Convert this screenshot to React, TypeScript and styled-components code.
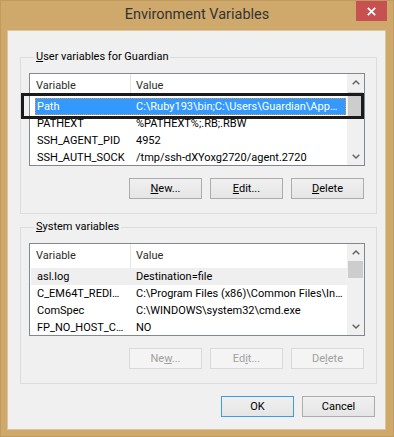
import React from 'react'
import styled, { createGlobalStyle } from 'styled-components'

type RowState = 'focused' | 'inactive' | 'none'

type EnvVar = {
  name: string
  value: string
  state?: RowState
}

const userVars: EnvVar[] = [
  { name: 'Path', value: 'C:\\Ruby193\\bin;C:\\Users\\Guardian\\App…', state: 'focused' },
  { name: 'PATHEXT', value: '%PATHEXT%;.RB;.RBW' },
  { name: 'SSH_AGENT_PID', value: '4952' },
  { name: 'SSH_AUTH_SOCK', value: '/tmp/ssh-dXYoxg2720/agent.2720' },
]

const systemVars: EnvVar[] = [
  { name: 'asl.log', value: 'Destination=file', state: 'inactive' },
  { name: 'C_EM64T_REDI…', value: 'C:\\Program Files (x86)\\Common Files\\In…' },
  { name: 'ComSpec', value: 'C:\\WINDOWS\\system32\\cmd.exe' },
  { name: 'FP_NO_HOST_C…', value: 'NO' },
]

const Chevron = ({ down }: { down?: boolean }) => (
  <svg width="8" height="5" viewBox="0 0 8 5">
    <polyline
      points={down ? '0.7,0.7 4,4 7.3,0.7' : '0.7,4.3 4,1 7.3,4.3'}
      fill="none"
      stroke="#606060"
      strokeWidth="1.4"
    />
  </svg>
)

const VarList = ({
  rows,
  thumbTop,
  thumbSize,
  marked,
}: {
  rows: EnvVar[]
  thumbTop: number
  thumbSize: number
  marked?: boolean
}) => (
  <List>
    <Table>
      <Header>
        <HeadCell $first>Variable</HeadCell>
        <HeadCell>Value</HeadCell>
      </Header>
      {rows.map((r) => (
        <Row key={r.name} $state={r.state ?? 'none'}>
          <RowInner $state={r.state ?? 'none'}>
            <NameCell>{r.name}</NameCell>
            <ValueCell>{r.value}</ValueCell>
          </RowInner>
        </Row>
      ))}
    </Table>
    <ScrollBar>
      <Arrow>
        <Chevron />
      </Arrow>
      <Track>
        <Thumb $top={thumbTop} $size={thumbSize} />
      </Track>
      <Arrow>
        <Chevron down />
      </Arrow>
    </ScrollBar>
    {marked && <Marker />}
  </List>
)

export default function App() {
  return (
    <>
      <GlobalStyle />
      <Window>
        <TitleBar>
          <Title>Environment Variables</Title>
          <CloseButton>
            <svg width="9" height="9" viewBox="0 0 9 9">
              <path d="M0.8 0.8 L8.2 8.2 M8.2 0.8 L0.8 8.2" stroke="#fff" strokeWidth="1.7" />
            </svg>
          </CloseButton>
        </TitleBar>
        <Client>
          <Group>
            <Legend>
              <u>U</u>ser variables for Guardian
            </Legend>
            <VarList rows={userVars} thumbTop={1} thumbSize={26} marked />
            <ButtonRow>
              <Button>
                <u>N</u>ew...
              </Button>
              <Button>
                <u>E</u>dit...
              </Button>
              <Button>
                <u>D</u>elete
              </Button>
            </ButtonRow>
          </Group>
          <Group $second>
            <Legend>
              <u>S</u>ystem variables
            </Legend>
            <VarList rows={systemVars} thumbTop={0} thumbSize={17} />
            <ButtonRow>
              <Button disabled>
                Ne<u>w</u>...
              </Button>
              <Button disabled>
                Ed<u>i</u>t...
              </Button>
              <Button disabled>
                De<u>l</u>ete
              </Button>
            </ButtonRow>
          </Group>
          <Footer>
            <Button $default>OK</Button>
            <Button>Cancel</Button>
          </Footer>
        </Client>
      </Window>
    </>
  )
}

const GlobalStyle = createGlobalStyle`
  html, body {
    margin: 0;
    padding: 0;
    background: #fff;
  }
  body {
    font-family: Roboto, 'Liberation Sans', Arial, sans-serif;
    font-size: 11px;
  }
  * {
    box-sizing: border-box;
  }
`

const Window = styled.div`
  width: 394px;
  height: 437px;
  background: #cfa96c;
  border: 1px solid #c09a5e;
  display: flex;
  flex-direction: column;
`

const TitleBar = styled.div`
  height: 29px;
  display: grid;
  grid-template-columns: 1fr auto 1fr;
  align-items: start;
`

const Title = styled.div`
  grid-column: 2;
  margin-top: 5px;
  font-size: 14.5px;
  line-height: 18px;
  color: #333;
`

const CloseButton = styled.div`
  grid-column: 3;
  justify-self: end;
  width: 31px;
  height: 20px;
  margin-right: 6px;
  background: #c75050;
  display: flex;
  align-items: center;
  justify-content: center;
`

const Client = styled.div`
  flex: 1;
  margin: 0 7px 6px 6px;
  border: 1px solid #dcc59e;
  background: #f0f0f0;
  padding: 0 8px 0 12px;
  display: flex;
  flex-direction: column;
`

const Group = styled.fieldset<{ $second?: boolean }>`
  margin: ${(p) => (p.$second ? '5px' : '18px')} 0 0;
  padding: 8px 11px 14px 8px;
  border: 1px solid #dcdcdc;
  min-width: 0;
`

const Legend = styled.legend`
  margin-left: 5px;
  padding: 0 2px;
  line-height: 16px;
  font-size: 11px;
  color: #000;
`

const List = styled.div`
  position: relative;
  height: 93px;
  border: 1px solid #828790;
  background: #fff;
  display: flex;
`

const Table = styled.div`
  flex: 1;
  min-width: 0;
  overflow: hidden;
  display: flex;
  flex-direction: column;
`

const Header = styled.div`
  height: 24px;
  flex-shrink: 0;
  display: flex;
`

const HeadCell = styled.div<{ $first?: boolean }>`
  width: ${(p) => (p.$first ? '101px' : 'auto')};
  flex: ${(p) => (p.$first ? '0 0 auto' : '1')};
  border-right: ${(p) => (p.$first ? '1px solid #e5e5e5' : 'none')};
  padding-left: ${(p) => (p.$first ? '6px' : '5px')};
  line-height: 24px;
  color: #2c2c2c;
`

const Row = styled.div<{ $state: RowState }>`
  height: 17px;
  flex-shrink: 0;
  margin-left: 1px;
  padding: 0 1px 0 4px;
  display: flex;
  background: ${(p) => (p.$state === 'inactive' ? '#efefef' : 'transparent')};
`

const RowInner = styled.div<{ $state: RowState }>`
  flex: 1;
  min-width: 0;
  display: flex;
  line-height: 15px;
  border: 1px ${(p) => (p.$state === 'focused' ? 'dotted #e8943a' : 'solid transparent')};
  background: ${(p) => (p.$state === 'focused' ? '#3399ff' : 'transparent')};
  color: ${(p) => (p.$state === 'focused' ? '#fff' : '#000')};
`

const NameCell = styled.div`
  width: 95px;
  flex-shrink: 0;
  padding-left: 1px;
  white-space: nowrap;
  overflow: hidden;
`

const ValueCell = styled.div`
  flex: 1;
  min-width: 0;
  padding-left: 5px;
  white-space: nowrap;
  overflow: hidden;
  text-overflow: ellipsis;
`

const ScrollBar = styled.div`
  width: 17px;
  flex-shrink: 0;
  background: #f0f0f0;
  display: flex;
  flex-direction: column;
`

const Arrow = styled.div`
  height: 17px;
  flex-shrink: 0;
  display: flex;
  align-items: center;
  justify-content: center;
`

const Track = styled.div`
  flex: 1;
`

const Thumb = styled.div<{ $top: number; $size: number }>`
  margin: ${(p) => p.$top}px 1px 0;
  height: ${(p) => p.$size}px;
  background: #cdcdcd;
`

const Marker = styled.div`
  position: absolute;
  left: -9px;
  top: 19px;
  width: 343px;
  height: 26px;
  border: 3px solid #1a1a1a;
  pointer-events: none;
`

const ButtonRow = styled.div`
  margin-top: 12px;
  padding-right: 1px;
  display: flex;
  justify-content: flex-end;
  gap: 8px;
`

const Footer = styled.div`
  margin-top: 12px;
  padding-right: 2px;
  display: flex;
  justify-content: flex-end;
  gap: 8px;
`

const Button = styled.button<{ $default?: boolean }>`
  width: 73px;
  height: 21px;
  padding: 0;
  font-family: inherit;
  font-size: 11px;
  color: #000;
  border: 1px solid ${(p) => (p.$default ? '#3c9be8' : '#acacac')};
  background: linear-gradient(#f0f0f0, #e5e5e5);
  border-radius: 0;

  &:disabled {
    color: #a0a0a0;
    border-color: #d9d9d9;
    background: #f4f4f4;
  }
`
